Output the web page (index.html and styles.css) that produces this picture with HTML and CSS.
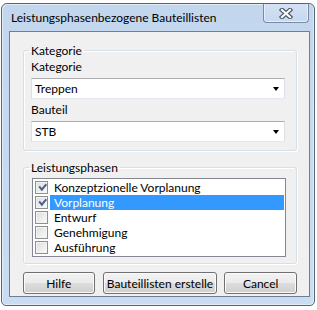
FILE: index.html
```html
<!DOCTYPE html>
<html lang="de">
<head>
    <meta charset="UTF-8">
    <title>Leistungsphasenbezogene Bauteillisten</title>
    <link rel="stylesheet" href="styles.css">
</head>
<body>
    <div class="window">
        <div class="titlebar">
            <span class="title">Leistungsphasenbezogene Bauteillisten</span>
            <button class="close-btn" aria-label="Schließen">
                <svg width="14" height="11" viewBox="0 0 14 11">
                    <path d="M3 2 L11 9 M11 2 L3 9" stroke="#4b5564" stroke-width="4.4" stroke-linecap="square"/>
                    <path d="M3 2 L11 9 M11 2 L3 9" stroke="#ffffff" stroke-width="2.2" stroke-linecap="square"/>
                </svg>
            </button>
        </div>

        <div class="client">
            <fieldset class="group group-kategorie">
                <legend>Kategorie</legend>
                <label class="field-label">Kategorie</label>
                <div class="combo">
                    <span>Treppen</span>
                    <span class="combo-arrow"></span>
                </div>
                <label class="field-label second">Bauteil</label>
                <div class="combo">
                    <span>STB</span>
                    <span class="combo-arrow"></span>
                </div>
            </fieldset>

            <fieldset class="group group-phasen">
                <legend>Leistungsphasen</legend>
                <ul class="listbox">
                    <li><span class="check checked"></span><span class="item-text">Konzeptzionelle Vorplanung</span></li>
                    <li class="selected"><span class="check checked"></span><span class="item-text">Vorplanung</span></li>
                    <li><span class="check"></span><span class="item-text">Entwurf</span></li>
                    <li><span class="check"></span><span class="item-text">Genehmigung</span></li>
                    <li><span class="check"></span><span class="item-text">Ausführung</span></li>
                </ul>
            </fieldset>

            <div class="buttons">
                <button class="btn btn-help">Hilfe</button>
                <button class="btn btn-create">Bauteillisten erstelle</button>
                <button class="btn btn-cancel">Cancel</button>
            </div>
        </div>
    </div>
</body>
</html>
```

FILE: styles.css
```css
body {
    margin: 0;
    padding: 0;
    background-color: #ffffff;
    font-family: Lato, "Noto Sans", Arial, sans-serif;
    font-size: 12px;
    color: #000;
}

.window {
    width: 301px;
    height: 293px;
    margin: 3px 0 0 1px;
    border: 1px solid #5a6470;
    border-radius: 6px 6px 5px 5px;
    padding: 0 4px 8px 7px;
    background: linear-gradient(#c2d6ee, #c9dcf2);
    box-shadow: inset 1px 1px 0 #e3edf8, inset -1px -1px 0 #e3edf8;
}

.titlebar {
    height: 27px;
    display: flex;
    align-items: flex-start;
    position: relative;
}

.title {
    padding: 6px 0 0 2px;
    line-height: 15px;
    white-space: nowrap;
}

.close-btn {
    position: absolute;
    top: 0;
    right: 1px;
    width: 46px;
    height: 19px;
    padding: 0;
    border: 1px solid #7a8aa0;
    border-top: none;
    border-radius: 0 0 4px 4px;
    background: linear-gradient(#d3e2f4, #c6d9f0);
    box-shadow: inset 0 -1px 0 #e6eef9, inset 1px 0 0 #e6eef9, inset -1px 0 0 #e6eef9;
    display: flex;
    align-items: center;
    justify-content: center;
}

.client {
    border: 1px solid #6f7f91;
    background-color: #f0f0f0;
    height: 253px;
    padding: 11px 12px 0 13px;
}

.group {
    margin: 0;
    padding: 1px 11px 8px 7px;
    border: 1px solid #d5dfe5;
    border-radius: 3px;
    box-shadow: inset 1px 1px 0 #fff, 1px 1px 0 #fff;
    min-width: 0;
}

.group legend {
    padding: 0 2px;
    margin-left: -2px;
    line-height: 15px;
}

.field-label {
    display: block;
    line-height: 15px;
    margin-bottom: 4px;
}

.field-label.second {
    margin-top: 3px;
}

.combo {
    height: 19px;
    background-color: #fff;
    border: 1px solid #dbdfe6;
    border-top-color: #abadb3;
    border-bottom-color: #e3e9ef;
    display: flex;
    align-items: center;
    justify-content: space-between;
    padding: 0 5px 0 3px;
}

.combo-arrow {
    width: 0;
    height: 0;
    border-left: 3.5px solid transparent;
    border-right: 3.5px solid transparent;
    border-top: 4px solid #000;
    margin-top: 1px;
}

.group-phasen {
    margin-top: 9px;
    padding: 3px 10px 6px 8px;
}

.group-phasen legend {
    margin-left: -3px;
}

.listbox {
    list-style: none;
    margin: 0;
    height: 75px;
    border: 1px solid #828790;
    background-color: #fff;
    padding: 1px;
}

.listbox li {
    display: flex;
    align-items: center;
    height: 15px;
}

.check {
    width: 11px;
    height: 11px;
    margin-left: 1px;
    border: 1px solid #8e8f8f;
    background: linear-gradient(135deg, #dcdcdc, #fbfbfb);
    box-shadow: inset 0 0 0 1px #f4f4f4;
    position: relative;
}

.check.checked::after {
    content: "";
    position: absolute;
    left: 2px;
    top: 1px;
    width: 6px;
    height: 3px;
    border-left: 2px solid #4a5f8c;
    border-bottom: 2px solid #4a5f8c;
    transform: rotate(-50deg) translate(0, 1px) skewX(-8deg);
}

.item-text {
    flex: 1;
    margin-left: 2px;
    padding-left: 4px;
    line-height: 15px;
    white-space: nowrap;
}

.listbox li.selected .item-text {
    background-color: #3399ff;
    color: #fff;
}

.buttons {
    display: flex;
    gap: 8px;
    margin-top: 8px;
}

.btn {
    height: 22px;
    padding: 0;
    font-family: inherit;
    font-size: 12px;
    color: #000;
    white-space: nowrap;
    border: 1px solid #707070;
    border-radius: 3px;
    background: linear-gradient(#f2f2f2 0%, #ebebeb 49%, #dddddd 50%, #cfcfcf 100%);
    box-shadow: inset 0 0 0 1px #fbfbfb;
}

.btn-help {
    width: 72px;
}

.btn-create {
    width: 115px;
}

.btn-cancel {
    width: 73px;
    margin-left: -1px;
}
```
